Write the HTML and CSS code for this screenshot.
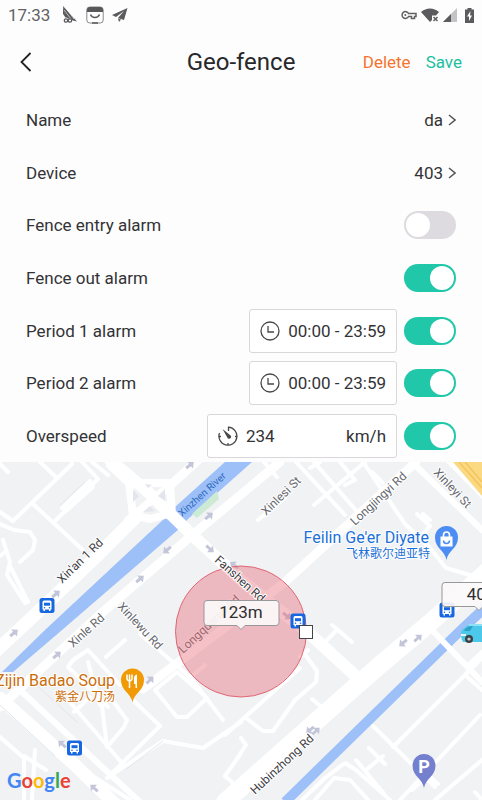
FILE: index.html
```html
<!DOCTYPE html>
<html lang="en">
<head>
<meta charset="utf-8">
<meta name="viewport" content="width=device-width, initial-scale=1">
<title>Geo-fence</title>
<link rel="stylesheet" href="styles.css">
</head>
<body>
<div class="status">
  <span class="time">17:33</span>
  <svg class="status-icon" width="16" height="18" viewBox="0 0 16 18" fill="#5b5b5e"><path d="M1 0 15 15.500l-4-1L3 11z"/><path d="M1 0v8l3 4z"/><path d="m4 2 8 11M2 4l7 9" stroke="#fff" stroke-width=".6"/><g fill="#fff" stroke="#5b5b5e" stroke-width="1.300"><circle cx="4" cy="14.500" r="1.700"/><circle cx="8" cy="14.500" r="1.700"/></g></svg>
  <svg class="status-icon" width="18" height="18" viewBox="0 0 18 18"><rect x=".8" y="1" width="16.400" height="16" rx="3" fill="#fff" stroke="#88888a"/><path d="M1 6V4a3 3 0 0 1 3-3h10a3 3 0 0 1 3 3v2z" fill="#58585b"/><path d="M4.500 8.500c1.500 4 7.500 4 9 0" fill="none" stroke="#58585b" stroke-width="1.500"/><path d="M6 17h6" stroke="#58585b" stroke-width="1.500"/></svg>
  <svg class="status-icon" width="16" height="16" viewBox="0 0 16 16" fill="#5b5b5e"><path d="M15.500 1 0 8l4 2 8-6-6 7 6 2zM6 11.500 7 15l2-2.500z"/></svg>
  <span class="spacer"></span>
  <div class="signals">
    <svg width="16" height="10" viewBox="0 0 16 10" fill="none" stroke="#606063" stroke-width="1.500"><path d="M7.500 3.500h7.500v3h-1.500v2h-3v-2h-3A3.400 3.400 0 1 1 7.500 3.500z"/><circle cx="4.300" cy="5" r="1" fill="#606063" stroke="none"/></svg>
    <svg width="18" height="15" viewBox="0 0 18 15"><path d="M0 4C5-.7 13-.7 18 4l-3 3.500h-4V12l-2 2z" fill="#5b5b5e"/><path d="m12.500 9 4 4m0-4-4 4" stroke="#5b5b5e" stroke-width="1.500"/></svg>
    <svg width="14" height="14" viewBox="0 0 14 14"><path d="M14 0v14H0z" fill="#c4c4c6"/><path d="M8 6v8H0z" fill="#5b5b5e"/></svg>
    <svg class="battery" width="9" height="15" viewBox="0 0 9 15"><path d="M2.500 0h4v1.500H9V15H0V1.500h2.500z" fill="#5b5b5e"/><path d="M5.500 3 2 8.500h2V13l3-5.500H5z" fill="#fff"/></svg>
  </div>
</div>

<header class="bar">
  <button class="back" type="button" aria-label="Back"><svg width="12" height="20" viewBox="0 0 12 20"><path d="M10.500 1 1.500 10l9 9" fill="none" stroke="#222226" stroke-width="1.800"/></svg></button>
  <h1>Geo-fence</h1>
  <div class="actions">
    <button class="delete" type="button">Delete</button>
    <button class="save" type="button">Save</button>
  </div>
</header>

<main class="settings">
  <div class="row"><span id="l-name">Name</span>
    <button class="value" type="button" aria-describedby="l-name">da<svg width="8" height="12" viewBox="0 0 8 12"><path d="m1 1 6 5-6 5"/></svg></button></div>
  <div class="row"><span id="l-device">Device</span>
    <button class="value" type="button" aria-describedby="l-device">403<svg width="8" height="12" viewBox="0 0 8 12"><path d="m1 1 6 5-6 5"/></svg></button></div>
  <div class="row"><label for="entry">Fence entry alarm</label><input class="switch" id="entry" type="checkbox"></div>
  <div class="row"><label for="out">Fence out alarm</label><input class="switch" id="out" type="checkbox" checked></div>
  <div class="row"><label for="p1">Period 1 alarm</label>
    <button class="field" type="button"><svg width="20" height="20" viewBox="0 0 20 20"><circle cx="10" cy="10" r="9"/><path d="M8 5v6h6"/></svg>00:00 - 23:59</button>
    <input class="switch" id="p1" type="checkbox" checked></div>
  <div class="row"><label for="p2">Period 2 alarm</label>
    <button class="field" type="button"><svg width="20" height="20" viewBox="0 0 20 20"><circle cx="10" cy="10" r="9"/><path d="M8 5v6h6"/></svg>00:00 - 23:59</button>
    <input class="switch" id="p2" type="checkbox" checked></div>
  <div class="row"><label for="speed-on">Overspeed</label>
    <label class="field speed"><svg width="20" height="20" viewBox="0 0 20 20"><path d="M10.500 5V1.200A9 9 0 1 1 1.500 7M1 10.500h2M17 10.500h2M10 17v2"/><path d="m4.500 3 7.500 6a2 2 0 1 1-2.800 2.300z" fill="#48484b" stroke="none"/></svg><input type="text" inputmode="numeric" value="234" aria-label="Speed limit"><span>km/h</span></label>
    <input class="switch" id="speed-on" type="checkbox" checked></div>
</main>

<svg class="map" viewBox="0 462 482 338" preserveAspectRatio="xMidYMid slice" role="img" aria-label="Map">
  <defs>
    <g id="arrow"><path d="M-5-1.500H0V-4.500L5 0 0 4.500V1.500H-5z" fill="#c3c5d8"/></g>
    <g id="bus"><rect x="-7.500" y="-7.500" width="15" height="15" rx="2.500" fill="#1768e0"/><path d="M-4.500-3.500q0-1.500 1.500-1.500h6q1.500 0 1.500 1.500V4H3.500v1.500H2V4h-4v1.500h-1.500V4h-1z" fill="#fff"/><path d="M-3-2.800h6v3h-6z" fill="#1768e0"/><circle cx="-2.500" cy="2.200" r=".8" fill="#1768e0"/><circle cx="2.500" cy="2.200" r=".8" fill="#1768e0"/></g>
    <path id="pin" d="M0 17.500C-1.500 8-11.500 6-11.500-5a11.500 11.500 0 0 1 23 0C11.500 6 1.500 8 0 17.500z"/>
  </defs>
  <rect y="462" width="482" height="338" fill="#f0f2f4"/>

  <!-- rivers and green strip -->
  <path d="M225 462h27l-64 57-9 10L62 630 13 672H2l43-42L165 518l10-11z" fill="#9dc0f9"/>
  <path d="M192 514 217 491l2 8-22 19z" fill="#cdead4"/>
  <path d="M285 802 461 630l30-28" fill="none" stroke="#9dc0f9" stroke-width="10"/>

  <!-- streets -->
  <g fill="none" stroke="#fff" stroke-linejoin="round" stroke-linecap="round">
    <g stroke-width="4">
      <path d="M0 512 13 521 72 464M33 504 83 550M54 522 98 479M62 508 90 481M62 508 66 511 93 487M0 464 8 472M40 462 56 477M92 462 108 475M82 462 98 479"/>
      <path d="M0 524 14 530 30 532 35 540 33 550 20 562M3 540 10 562 7 575 25 603M5 552 0 556M10 566 28 602"/>
      <path d="M258 520 285 498M264 462 277 477M314 505 365 462M296 462 345 515M314 462 360 515M310 468 320 462M340 462 355 480 345 485M372 472 383 483"/>
      <path d="M417 514 430 526 420 538M423 514 430 520M363 462 405 524 430 548 446 568 480 578"/>
      <path d="M332 625 352 642M335 632 322 645M304 653 317 671 316 682 295 700 273 731 263 731 246 718M312 699 325 710M300 657 308 650M225 735 300 668M241 738 246 745 240 754"/>
      <path d="M73 660 88 650 120 685M73 660 68 667 108 707M88 662 100 705M74 712 90 697M108 694 127 720 124 727 107 747M107 747 102 706M106 657 125 640M68 700 122 763M133 700 160 726 107 778M107 778 163 741 203 748 241 722"/>
      <path d="M155 690 177 672 207 698 187 717 177 717zM140 634 167 657 191 678 223 720M187 680 205 665"/>
      <path d="M241 753 225 776 241 790M0 737 24 758V800M24 756 46 770M35 750 32 800M71 762 130 800"/>
      <path d="M373 726 435 787M369 748 385 764M383 756 366 770M356 760 385 795M480 660 393 747M480 715 400 800M482 655 465 675 482 690M468 665 482 652M412 790 428 775 438 784M435 800 482 760M475 792 482 800"/>
      <path d="M302 800 325 778 345 763 356 770 390 800M315 800 334 778 350 780 370 802"/>
    </g>
    <path stroke-width="6" d="M430 628 482 682M412 462 482 530M20 690 100 765 140 802"/>
    <path stroke-width="9" d="M280 462 190 537 97 617 0 707M416 462 284 583 143 689"/>
    <path stroke-width="12" d="M110 460 147 491 190 533 241 580 310 634 361 681"/>
    <path stroke-width="13" d="M-5 652 40 610 100 553 137 516M0 698 75 765 115 804"/>
    <path stroke-width="9" d="M165 490 206 453"/>
    <path stroke-width="18" d="M225 802 321 717 380 665 431 622 490 569"/>
    <path stroke-width="8" d="M110 465 129 483 133 515 150 519 172 513M129 483 170 483 172 515M128 520 168 487"/>
  </g>
  <path d="M133 490 139 496 133 502zM145 484l7 1-4 3zM158 496l7-7v12zM143 512l7-6 5 5z" fill="#e3e5ec"/>
  <path d="M31 680 78 723M125 770 163 741M0 705 55 756M60 505 85 482" fill="none" stroke="#e3e6eb"/>
  <path d="M443 459 486 503V459z" fill="#fff"/>
  <path d="M453 462 482 496V462z" fill="#fbd983"/>
  <path d="M465 462 482 482M459 462 482 488" fill="none" stroke="#f3c55c" stroke-width="1.500"/>

  <g>
    <use href="#arrow" transform="translate(190 465) rotate(-40)"/><use href="#arrow" transform="translate(209 516) rotate(-40)"/>
    <use href="#arrow" transform="translate(167 550) rotate(140)"/><use href="#arrow" transform="translate(210 549) rotate(42)"/>
    <use href="#arrow" transform="translate(140 579) rotate(-40)"/><use href="#arrow" transform="translate(56 594) rotate(-40)"/>
    <use href="#arrow" transform="translate(14 633) rotate(-40)"/><use href="#arrow" transform="translate(57 655) rotate(-40)"/>
    <use href="#arrow" transform="translate(150 680) rotate(-45)"/><use href="#arrow" transform="translate(62 744) rotate(222)"/>
    <use href="#arrow" transform="translate(94 788) rotate(222)"/><use href="#arrow" transform="translate(403 643) rotate(140)"/>
    <use href="#arrow" transform="translate(418 638) rotate(-42)"/><use href="#arrow" transform="translate(310 730) rotate(140)"/>
    <use href="#arrow" transform="translate(316 731) rotate(-42)"/><use href="#arrow" transform="translate(287 616) rotate(38)"/>
    <use href="#arrow" transform="translate(234 565) rotate(218)"/>
  </g>

  <g class="road-label">
    <text class="river" transform="translate(182 517) rotate(-42)">Xinzhen River</text>
    <text transform="translate(62 584) rotate(-44)" class="major">Xin'an 1 Rd</text>
    <text transform="translate(117 607) rotate(47)">Xinlewu Rd</text>
    <text transform="translate(73 648) rotate(-42)">Xinle Rd</text>
    <text transform="translate(183 654) rotate(-43)">Longquanyi Rd</text>
    <text transform="translate(266 516) rotate(-44)">Xinlesi St</text>
    <text transform="translate(355 526) rotate(-43)">Longjingyi Rd</text>
    <text transform="translate(433 473) rotate(47)">Xinleyi St</text>
    <text transform="translate(255 795) rotate(-43)" class="major">Hubinzhong Rd</text>
  </g>

  <!-- fence -->
  <circle cx="241" cy="631.500" r="65.500" fill="#e96b78" fill-opacity=".42" stroke="#df6674"/>
  <g class="road-label"><text transform="translate(214 561) rotate(42)" class="major">Fanshen Rd</text></g>

  <use href="#bus" x="47" y="605.500"/><use href="#bus" x="74.500" y="748"/><use href="#bus" x="298" y="621"/><use href="#bus" x="447" y="610"/>

  <!-- places -->
  <g class="place shop"><text x="429" y="543">Feilin Ge'er Diyate</text><text class="cjk" x="430" y="558">飞林歌尔迪亚特</text></g>
  <g class="place food"><text x="115" y="686">Zijin Badao Soup</text><text class="cjk" x="115" y="701">紫金八刀汤</text></g>
  <g transform="translate(446.500 542.500)"><use href="#pin" fill="#4b8df2"/><path d="M-6-6H6V4H-6z" fill="#fff"/><path d="M-3-5.500v-2a3 3 0 0 1 6 0v2" fill="none" stroke="#fff" stroke-width="1.600"/><path d="M-3-2a3 3 0 0 0 6 0" fill="none" stroke="#4b8df2" stroke-width="1.600"/></g>
  <g transform="translate(132.500 685)"><use href="#pin" fill="#f29a06"/><path d="M-5.500-10.500v4q0 2 2.500 2.500 2.500-.5 2.500-2.500v-4M-3-10.500V3" fill="none" stroke="#fff" stroke-width="1.500"/><path d="M1.500-7q0-3 3-3.500V3H3v-4H1.500z" fill="#fff"/></g>
  <g transform="translate(424 770.500)"><use href="#pin" fill="#747fce"/><text class="parking" x="0" y="2">P</text></g>

  <!-- vehicle -->
  <path d="M461 634q0-5 5-7l3-3h14v18h-20q-2-3-2-8z" fill="#4cc8ea"/><path d="M470 626h3l-3 5h-6q1-3 6-5z" fill="#2da3c6"/><path d="M468 624h15v2h-14z" fill="#8fe0f3"/><path d="M461 635h5" stroke="#e4f7fb" stroke-width="2"/>
  <circle cx="469" cy="639" r="4" fill="#3c4245"/><circle cx="469" cy="639" r="1.600" fill="#c9ced0"/>

  <!-- callouts -->
  <g class="callout">
    <path d="M207 600.500h69q3 0 3 3v19q0 3-3 3h-31l-4 4-4-4h-30q-3 0-3-3v-19q0-3 3-3z"/>
    <text x="241" y="618">123m</text>
    <path d="M445 582.500h69q3 0 3 3v18q0 3-3 3h-31l-4 4-4-4h-30q-3 0-3-3v-18q0-3 3-3z"/>
    <text x="481" y="600">403</text>
  </g>
  <rect x="299.500" y="625.500" width="13" height="13" fill="#fff" stroke="#444"/>

  <text class="google" x="7" y="788"><tspan fill="#4285f4">G</tspan><tspan fill="#ea4335">o</tspan><tspan fill="#fbbc05">o</tspan><tspan fill="#4285f4">g</tspan><tspan fill="#34a853">l</tspan><tspan fill="#ea4335">e</tspan></text>
</svg>
</body>
</html>
```
FILE: styles.css
```css
* { box-sizing: border-box; }

body {
  margin: 0;
  min-height: 100vh;
  display: flex;
  flex-direction: column;
  background: #fdfdfd;
  color: #333336;
  font: 17px/24px Roboto, "Noto Sans CJK SC", sans-serif;
}

button, input {
  font: inherit;
  color: inherit;
  margin: 0;
  padding: 0;
  border: 0;
  background: none;
}

.status {
  display: flex;
  align-items: center;
  height: 30px;
  padding: 0 8px;
  gap: 8px;
  color: #626265;
}
.time { margin-right: 4px; }
.spacer { flex: 1; }
.signals {
  display: flex;
  align-items: center;
  gap: 4px;
}
.battery { margin-left: 4px; }

.bar {
  display: grid;
  grid-template-columns: 1fr auto 1fr;
  align-items: center;
  height: 64px;
  padding: 0 20px;
}
.bar h1 {
  margin: 0;
  font-size: 24px;
  font-weight: 400;
  color: #28282b;
}
.back {
  display: flex;
  justify-self: start;
}
.actions {
  display: flex;
  justify-self: end;
  gap: 15px;
}
.delete { color: #f5732e; }
.save { color: #20bf9e; }

.settings {
  flex: 1;
  display: grid;
  grid-auto-rows: 1fr;
  padding: 0 26px;
}
.row {
  display: flex;
  align-items: center;
  gap: 7px;
  min-height: 50px;
}
.row > :first-child { margin-right: auto; }

.value {
  display: flex;
  align-items: center;
  gap: 5px;
}
.value svg {
  fill: none;
  stroke: #55555a;
  stroke-width: 1.5;
}

.field {
  display: flex;
  align-items: center;
  gap: 8px;
  height: 44px;
  padding: 0 10px;
  border: 1px solid #d9d7da;
  border-radius: 3px;
  background: #fff;
}
.field svg {
  fill: none;
  stroke: #48484b;
  stroke-width: 1.3;
}
.speed { width: 190px; }
.speed input {
  flex: 1;
  min-width: 0;
}

.switch {
  appearance: none;
  display: flex;
  width: 52px;
  height: 28px;
  padding: 2px;
  border-radius: 14px;
  background: #dddbdf;
}
.switch::before {
  content: "";
  width: 24px;
  height: 24px;
  border-radius: 50%;
  background: #fff;
}
.switch:checked {
  justify-content: flex-end;
  background: #20c7a8;
}

.map {
  display: block;
  width: 100%;
  aspect-ratio: 482 / 338;
}
.road-label text {
  font-size: 12px;
  fill: #65686e;
  stroke: #fff;
  stroke-width: 2px;
  paint-order: stroke;
}
.road-label .major {
  font-size: 12px;
  fill: #3f4145;
}
.road-label .river {
  font-size: 10px;
  fill: #2d68bd;
  stroke: none;
}
.place text {
  font-size: 16px;
  text-anchor: end;
  stroke: #fff;
  stroke-width: 2px;
  paint-order: stroke;
}
.place .cjk {
  font-family: "Noto Sans CJK SC", sans-serif;
  font-size: 12px;
}
.shop { fill: #1b6fd8; }
.food { fill: #cb6d08; }
.parking {
  font-size: 18px;
  font-weight: 700;
  text-anchor: middle;
  fill: #fff;
}
.callout path {
  fill: #fbf8f8;
  fill-opacity: 0.92;
  stroke: #98989a;
}
.callout text {
  font-size: 17px;
  text-anchor: middle;
  fill: #2e2e30;
}
.google {
  font-family: Lato, sans-serif;
  font-size: 20px;
  font-weight: 700;
}
```
